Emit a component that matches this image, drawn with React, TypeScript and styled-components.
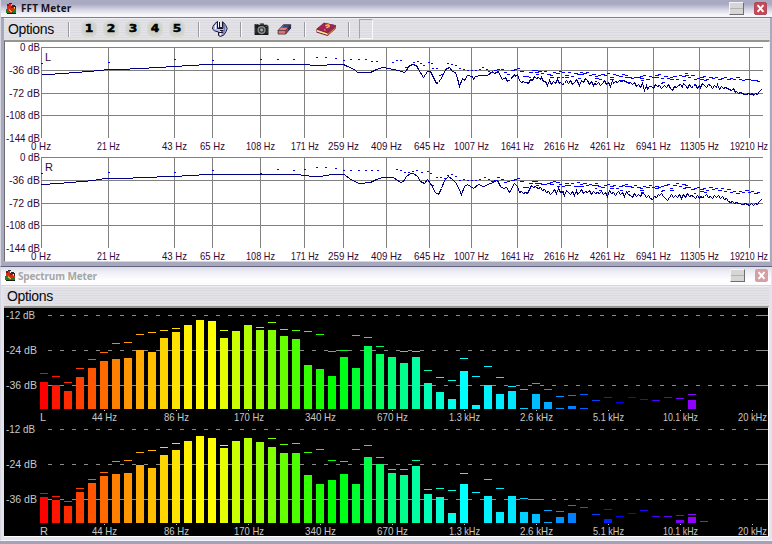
import React from 'react';
import styled, { createGlobalStyle } from 'styled-components';

const Global = createGlobalStyle`
  * { box-sizing: border-box; }
  body { margin: 0; background: #a3a3b8; overflow: hidden; }
`;

const Desktop = styled.main`
  width: 772px;
  height: 544px;
  display: flex;
  flex-direction: column;
  overflow: hidden;
  font-family: "Liberation Sans", Arial, sans-serif;
  background: #a3a3b8;
`;

const Frame = styled.section<{ $active?: boolean }>`
  height: ${p => (p.$active ? 267 : 274)}px;
  flex: none;
  display: flex;
  flex-direction: column;
  padding: ${p => (p.$active ? '0 2px 4px 3px' : '0 3px 3px 3px')};
  border-left: 1px solid #d6d6e0;
  border-bottom: 1px solid ${p => (p.$active ? '#62627c' : '#f4f4fa')};
  background: ${p => (p.$active ? '#a8a8be' : '#e3e3ee')};
`;

const TitleBar = styled.header<{ $active?: boolean }>`
  height: ${p => (p.$active ? 18 : 19)}px;
  flex: none;
  display: flex;
  align-items: center;
  margin: 0 -2px 0 -3px;
  padding: ${p => (p.$active ? '0 5px 1px 5px' : '0 3px 1px 4px')};
  border-bottom: 1px solid ${p => (p.$active ? '#7d7da0' : '#d5d5e0')};
  background: ${p => p.$active
    ? 'linear-gradient(#aaaac4 0, #a9a9c2 4px, #d8d8e6 10px, #f7f7fb 15px)'
    : 'linear-gradient(#dcdce8 0, #eeeef6 5px, #fff 13px, #fcfcff 18px)'};
`;

const Title = styled.h1<{ $active?: boolean }>`
  margin: 0 auto 0 ${p => (p.$active ? 4 : 2)}px;
  font: bold 10px/14px "Open Sans", "Liberation Sans", sans-serif;
  letter-spacing: ${p => (p.$active ? '0.1px' : '-0.15px')};
  color: ${p => (p.$active ? '#17121c' : '#a6a6a6')};
`;

const MinButton = styled.button`
  width: 15px;
  height: 13px;
  padding: 0;
  border: 1px solid;
  border-color: #f4f4f4 #6e6e72 #6e6e72 #f4f4f4;
  background: linear-gradient(#d6d6d6 5px, #b2b2b2 5px, #b2b2b2 6px, #d6d6d6 6px);
`;

const CloseButton = styled.button<{ $active?: boolean }>`
  width: 13px;
  height: 13px;
  margin-left: 10px;
  padding: 0;
  display: grid;
  place-items: center;
  border: 1px solid ${p => (p.$active ? '#b04a58' : '#cfa0a5')};
  border-radius: 2px;
  background: ${p => (p.$active ? '#c54758' : '#d5a1a5')};
  svg { width: 9px; height: 9px; }
`;

const Toolbar = styled.nav<{ $dense?: boolean }>`
  height: ${p => (p.$dense ? 22 : 20)}px;
  flex: none;
  display: flex;
  align-items: center;
  padding-left: ${p => (p.$dense ? 4 : 3)}px;
  background: repeating-linear-gradient(#e1e1e6 0 2px, #dbdbe1 2px 3px, #e4e4e8 3px 4px, #dadae0 4px 5px);
  box-shadow: inset 0 1px #ededf2;
`;

const MenuLabel = styled.span`
  width: 60px;
  font-size: 14px;
  line-height: 18px;
  letter-spacing: -0.35px;
  color: #08080c;
`;

const Divider = styled.i<{ $after: number }>`
  width: 2px;
  height: 15px;
  flex: none;
  margin-right: ${p => p.$after}px;
  border-left: 1px solid #9a9aa0;
  border-right: 1px solid #f8f8fa;
`;

const Presets = styled.div`
  display: flex;
  gap: 6px;
  margin-right: 13px;
`;

const Preset = styled.button`
  width: 16px;
  height: 16px;
  padding: 0 0 1px;
  border: 0;
  border-radius: 6px;
  background: #d1d3ca;
  box-shadow: inset 0 0 2px 1px #dbdcd8;
  font: bold 11px/14px "DejaVu Sans", sans-serif;
  -webkit-text-stroke: 0.5px #000;
  color: #000;
  span { display: block; transform: scaleX(1.12); }
`;

const IconSlot = styled.span<{ $w: number; $after: number }>`
  width: ${p => p.$w}px;
  height: 18px;
  flex: none;
  display: grid;
  place-items: center;
  margin-right: ${p => p.$after}px;
`;

const EmptySlot = styled.span`
  width: 14px;
  height: 20px;
  border: 1px solid;
  border-color: #a4a4aa #fafafc #fafafc #a4a4aa;
`;

const Panel = styled.div<{ $dark?: boolean }>`
  flex: 1;
  min-height: 0;
  border-top: 2px solid #96968f;
  border-right: 1px solid ${p => (p.$dark ? '#fff' : '#f3f3ee')};
  border-left: ${p => (p.$dark ? 0 : 1)}px solid #6e6e72;
  border-bottom: 1px solid ${p => (p.$dark ? '#fff' : '#d8d8cf')};
  background: ${p => (p.$dark ? '#000' : '#fff')};
  overflow: hidden;
`;

const Plot = styled.svg`
  display: block;
  shape-rendering: crispEdges;
  text { font: 11px "Liberation Sans", Arial, sans-serif; }
`;

const AppIcon = () => (
  <svg width="11" height="11" viewBox="0 0 11 11" shapeRendering="crispEdges">
    <path d="M1 1h4v2h2v1h1v2h2v4H1z" fill="#d82a16" />
    <path d="M1 1h2v2H1zM5 3h2v2H5z" fill="#8c1010" />
    <path d="M3 0h3v1H3zM6 2h3v1h1v3H9V4H7V3H6z" fill="#1e2a30" />
    <path d="M0 6h2v2h2v2H0zM6 8h2V7h2v3H6z" fill="#207a2c" />
    <path d="M3 6h1v1h1v1h1v1H4V8H3zM8 5h1v1H8z" fill="#f1a321" />
    <path d="M1 10h9v1H1z" fill="#171c14" />
  </svg>
);

const Cross = () => (
  <svg viewBox="0 0 10 10"><path d="M1.7 1.3 8.3 8.7M8.3 1.3 1.7 8.7" stroke="#fff" strokeWidth="2.2" /></svg>
);

const WrenchIcon = () => (
  <svg width="16" height="16" viewBox="0 0 16 16">
    <path d="M5.5.5 3 2.5 1 5.5.5 8l2 1.8 4 1.2v3.5l2 1 3.5-1.7 2-3.3 1.2-3-1.4-3-2.3-3-1-.8V6.5h-5z" fill="#b9bde8" stroke="#15152f" />
    <path d="M7.5 1v5M5.5 1v6.5H11V1" fill="none" stroke="#15152f" />
    <path d="M6.5 1v5.5M3.5 4v4M8.5 9v5" fill="none" stroke="#fff" />
    <path d="M8 9.5h3.5M10 9v2M7 11.5h4" stroke="#15152f" />
    <path d="M12.5 4v5l-1.7 4.5" fill="none" stroke="#777bb4" strokeWidth="1.4" />
  </svg>
);

const CameraIcon = () => (
  <svg width="17" height="13" viewBox="0 0 17 14">
    <path d="M1 1h4v1h2V.5h4V2h4v1h1v10H1z" fill="#1b1d1d" />
    <path d="M2 1.5h2M6.5 1h4M13 3.5h2" stroke="#6f7272" />
    <path d="M2.5 5v6M14.5 5v6" stroke="#3f4242" />
    <circle cx="8.6" cy="7.6" r="4.4" fill="#8e9292" />
    <circle cx="8.6" cy="7.6" r="3" fill="#3b3f40" />
    <circle cx="8.6" cy="7.6" r="1.6" fill="#a9aeae" />
  </svg>
);

const EraserIcon = () => (
  <svg width="15" height="11" viewBox="0 0 16 12">
    <path d="M6.5 1h8L9.5 7H1z" fill="#e28786" />
    <path d="M7.5.7h7.2L11.8 4H4.6z" fill="#244f91" />
    <path d="M1 7h8v3.8H1z" fill="#df7272" />
    <path d="M9.4 7 14.7.8v3.7L9.4 10.8z" fill="#a94247" />
    <path d="m11.7 4 3-3.3v3.8l-3 3z" fill="#173462" />
    <path d="M1 7h8.3v4H1zM1 7 6.7.7h8v4l-5.3 6.1M9.3 7l5.4-6.2" fill="none" stroke="#311f30" strokeWidth=".8" />
  </svg>
);

const BookIcon = () => (
  <svg width="21" height="15" viewBox="0 0 21 15">
    <path d="M.5 7 8 .7l12 2.6v3.2l-8.5 7.6L.5 10.4z" fill="#722041" />
    <path d="m1 7.8 10.3 3.4L20 4.2v1.7l-8.5 7L1 9.6z" fill="#ffc94d" />
    <path d="m1 9 10.4 3.1" fill="none" stroke="#fff0a6" strokeWidth=".9" />
    <path d="m11.4 12.6 8.6-7V4l-8.6 6.7z" fill="#8a3a4d" />
    <path d="M.5 7 8 .7l12 2.6-8.8 7.4z" fill="#9d2458" />
    <path d="M9.4 3.8c2-1.5 4.5-.7 3.7.6-.5.8-2.4.5-2.8 1.7M9.3 7.6l-.8.6" stroke="#ffc233" strokeWidth="1.4" fill="none" />
  </svg>
);

const gridX = [41, 108, 174, 212, 260, 304, 343, 386, 429, 471, 517, 561, 607, 653, 699, 749];
const freqs: [string, number, number][] = [
  ['0 Hz', 31, 20], ['21 Hz', 97, 23], ['43 Hz', 162, 25], ['65 Hz', 200, 25], ['108 Hz', 246, 29],
  ['171 Hz', 291, 28], ['259 Hz', 328, 31], ['409 Hz', 371, 31], ['645 Hz', 414, 31], ['1007 Hz', 454, 35],
  ['1641 Hz', 501, 33], ['2616 Hz', 544, 35], ['4261 Hz', 590, 35], ['6941 Hz', 636, 35],
  ['11305 Hz', 680, 39], ['19210 Hz', 730, 38],
];
const levels: [string, number, number, number][] = [
  ['0 dB', 20, 20, 51], ['-36 dB', 9, 31, 74], ['-72 dB', 9, 31, 97], ['-108 dB', 6, 34, 119], ['-144 dB', 6, 34, 142],
];

const curveL = '41,74 48,74 62,73 75,72 88,71 99,70 108,69 119,69 140,68 158,67 174,66 190,65 207,64 304,64 315,65 322,65 332,64 343,64 347,66 354,69 357,72 370,72 376,69 382,67 388,68 398,70 404,72 406,70 408,66 412,64 416,65 418,69 423,77 427,71 430,71 433,77 436,83 438,82 442,76 445,69 449,67 452,71 455,72 457,78 459,86 462,78 464,80 467,75 472,76 473,79 475,76 480,75 487,75 492,71 494,73 498,71 500,76 502,79 505,77 507,81 510,79 514,74';
const curveR = '41,74 58,73 70,72 82,71 93,70 104,68 125,68 140,67 174,66 190,65 207,64 297,64 304,65 313,66 320,66 331,64 344,64 350,69 359,73 370,72 376,69 382,67 393,67 400,72 403,71 406,66 410,63 413,63 417,66 420,71 424,73 427,69 430,73 435,82 438,84 441,78 444,70 448,66 452,69 456,73 461,84 464,76 467,74 473,78 478,74 483,76 490,73 497,70 500,76 503,78 506,77 509,82 514,73';
const tailL = [76, 74, 80, 82, 81, 82, 82, 83, 79, 80, 76, 78, 77, 79, 77, 81, 81, 85, 80, 84, 81, 83, 79, 83, 82, 84, 83, 80, 83, 80, 84, 82, 79, 81, 85, 80, 82, 78, 80, 84, 81, 85, 83, 84, 82, 85, 83, 80, 84, 82, 86, 80, 83, 81, 82, 80, 81, 80, 81, 82, 83, 82, 84, 82, 86, 84, 87, 83, 90, 85, 89, 86, 86, 88, 84, 86, 85, 88, 86, 85, 87, 84, 88, 90, 86, 87, 85, 84, 87, 83, 85, 88, 84, 87, 86, 84, 88, 85, 87, 83, 85, 87, 84, 85, 88, 85, 87, 84, 89, 86, 88, 87, 88, 89, 90, 88, 92, 91, 93, 92, 93, 94, 94, 93, 94, 93, 95, 93, 94, 91, 89];
const tailR = [74, 76, 82, 81, 83, 82, 83, 79, 75, 77, 76, 77, 78, 77, 80, 79, 82, 81, 84, 82, 79, 83, 78, 82, 81, 85, 80, 82, 84, 81, 85, 80, 84, 82, 79, 83, 81, 82, 80, 84, 81, 83, 82, 83, 81, 84, 82, 86, 80, 83, 82, 85, 82, 81, 84, 82, 86, 81, 84, 85, 87, 83, 86, 84, 86, 82, 84, 87, 85, 88, 89, 86, 87, 84, 85, 83, 86, 88, 90, 87, 84, 87, 85, 87, 84, 88, 84, 87, 83, 86, 85, 86, 88, 85, 88, 86, 87, 86, 84, 87, 86, 88, 85, 87, 85, 88, 86, 89, 88, 91, 92, 91, 93, 92, 93, 93, 94, 94, 93, 94, 95, 93, 95, 93, 94, 91, 89];

const sparseL = '41,63 108,62 174,59 212,60 260,59 277,59 293,59 316,57 325,57 335,58 343,60 350,59 358,59 365,59 371,61 376,61 392,62 396,60 400,60 405,67 413,62 417,61 420,63 423,65 428,62 431,63 432,68 436,68 439,75 441,74 447,63 451,64 455,65 459,68 463,69 467,70 471,70 475,70 479,69 482,67 486,69 488,71 491,72 494,70 497,69 501,69 504,72 507,74';
const sparseR = '41,63 108,62 174,62 212,60 260,63 277,59 293,60 304,59 316,57 325,57 335,58 343,60 350,60 358,60 365,60 371,60 377,60 396,59 400,60 404,62 408,62 412,61 416,60 421,62 427,61 430,63 432,75 436,67 440,67 444,68 447,65 451,64 455,66 459,70 463,69 467,70 471,70 475,70 479,69 484,67 488,69 491,71 494,70 497,67 501,69 504,72 507,71';
const upperL = [70, 69, 68, 71, 76, 76, 72, 70, 70, 71, 73, 71, 74, 75, 72, 73, 71, 72, 75, 72, 76, 73, 74, 72, 73, 72, 75, 74, 76, 75, 74, 75, 73, 77, 74, 75, 76, 74, 75, 77, 78, 77, 77, 76, 75, 79, 76, 77, 75, 74, 78, 76, 78, 77, 76, 79, 75, 76, 73, 77, 75, 79, 78, 77, 76, 79, 77, 78, 77, 79, 78, 77, 79, 78, 79, 77, 79, 80, 79, 79, 80, 80, 81];
const upperR = [70, 69, 68, 71, 77, 77, 73, 71, 71, 73, 74, 74, 73, 72, 71, 72, 74, 76, 73, 75, 73, 76, 72, 74, 73, 75, 74, 75, 73, 76, 77, 75, 74, 76, 75, 78, 76, 75, 74, 76, 77, 75, 77, 78, 76, 77, 75, 77, 76, 77, 76, 75, 74, 78, 75, 73, 76, 74, 75, 77, 79, 78, 77, 79, 78, 80, 77, 79, 78, 80, 78, 81, 79, 82, 81, 83, 81, 82, 80, 82, 81, 83, 82];

function peakPath(sparse: string, upper: number[]) {
  const marks = sparse.split(' ').map(p => {
    const [x, y] = p.split(',').map(Number);
    return `M${x} ${y + 0.5}h${x > 490 ? 3 : 2}`;
  });
  upper.forEach((y, i) => {
    const x = 511 + i * 3;
    marks.push(`M${x} ${y + 0.5}h${i % 3 ? 3 : 4}`);
    if (x < 522) return;
    if (i % 7 === 1 && x < 720) marks.push(`M${x + 1} ${y + 4.5}h3`);
    if (i % 5 === 3 && x < 710) marks.push(`M${x} ${y + 2.5}h4`);
    if (i % 11 === 6 && x < 700) marks.push(`M${x} ${y + 5.5}h2`);
  });
  return marks.join('');
}

function FftChannel({ name, top }: { name: 'L' | 'R'; top: number }) {
  const left = name === 'L';
  const values = left ? tailL : tailR;
  const step = 246 / (values.length - 1);
  const tail = values.map((y, i) => `${Math.round(515 + i * step)},${y}`).join(' ');
  return (
    <g transform={`translate(0 ${top})`}>
      <g fill="#808080">
        {[47, 70, 93, 115].map(y => <rect key={y} x="41" y={y} width="722" height="1" />)}
        {gridX.map(x => <rect key={x} x={x} y="47" width="1" height="91" />)}
      </g>
      <g fill="#2e0838">
        {levels.map(([t, x, w, y]) => <text key={t} x={x} y={y} textLength={w} lengthAdjust="spacingAndGlyphs">{t}</text>)}
        {freqs.map(([t, x, w]) => <text key={t} x={x} y="150" textLength={w} lengthAdjust="spacingAndGlyphs">{t}</text>)}
        <text x="45" y="61">{name}</text>
      </g>
      <polyline transform="translate(.5 .5)" fill="none" points={`${left ? curveL : curveR} ${tail}`} stroke="#000080" />
      <path d={peakPath(left ? sparseL : sparseR, left ? upperL : upperR)} stroke="#0000ff" />
    </g>
  );
}

// Level tops and held peaks, in pixel rows; null marks a band with nothing drawn.
type Rows = (number | null)[];
const _ = null;
const topsL: Rows = [382, 385, 391, 377, 368, 361, 359, 358, 350, 352, 338, 332, 325, 320, 321, 338, 331, 325, 330, 330, 336, 339, 365, 369, 376, 357, 368, 346, 354, 357, 363, 357, 383, 392, 399, 371, 405, 385, 394, 391, 408, 394, 402, 408, 406, 408, _, _, _, _, _, _, _, _, 400];
const peaksL: Rows = [373, 376, 382, 368, 359, 352, 343, 342, 334, 332, 330, 328, _, _, _, 330, _, _, 327, 322, 329, 330, 331, 334, 351, 350, 335, 337, 346, _, 351, 351, 370, 377, 380, 358, 376, 366, 377, 386, 389, 383, 389, 396, 395, 394, 400, 397, 402, 397, 399, 400, 397, 398, 394];
const topsR: Rows = [497, 500, 506, 492, 483, 476, 474, 473, 465, 468, 455, 450, 441, 436, 438, 448, 441, 438, 442, 447, 453, 453, 475, 484, 480, 474, 484, 457, 464, 473, 475, 466, 494, 497, 513, 484, _, 496, 512, 496, 512, 514, 522, 517, 513, _, _, 519, _, _, _, _, _, 520, 517];
const peaksR: Rows = [493, 496, 501, 488, 479, 472, 461, 460, 452, 450, 447, 443, _, _, _, 445, _, _, _, 438, 444, 443, 452, 449, 460, 461, 449, 445, 457, 469, 469, 460, 489, 488, 490, 473, 492, 479, 488, _, 498, 499, 510, 511, 505, 507, 514, 509, 516, 513, 510, 516, 516, 515, 514, 521];

const hueStops = [[0, 0], [10, 50], [12, 57], [14, 60], [24, 120], [35, 180], [39, 186], [44, 210], [48, 240], [55, 280]];
function bandColor(i: number) {
  const n = hueStops.findIndex(s => s[0] >= i);
  if (n <= 0) return '#f00';
  const [a, h] = hueStops[n - 1];
  const [b, k] = hueStops[n];
  return `hsl(${h + ((i - a) / (b - a)) * (k - h)} 100% 50%)`;
}

const bandLabels: [string, number, number][] = [
  ['44 Hz', 92, 25], ['86 Hz', 164, 25], ['170 Hz', 234, 30], ['340 Hz', 305, 31], ['670 Hz', 377, 31],
  ['1.3 kHz', 449, 31], ['2.6 kHz', 520, 33], ['5.1 kHz', 593, 31], ['10.1 kHz', 663, 35], ['20 kHz', 738, 29],
];

function SpectrumChannel({ name, base, tops, peaks }: { name: string; base: number; tops: Rows; peaks: Rows }) {
  return (
    <g>
      {['-12 dB', '-24 dB', '-36 dB'].map((t, n) => {
        const y = base - 94 + n * 35;
        return (
          <g key={t}>
            <path d={`M48 ${y}.5H756`} stroke="#8c8c8c" strokeDasharray="4 8" />
            <rect x="756" y={y} width="12" height="1" fill="#8c8c8c" />
            <text x="6" y={y + 4} fill="#c8c8c8" textLength={n ? 31 : 29} lengthAdjust="spacingAndGlyphs">{t}</text>
          </g>
        );
      })}
      {tops.map((y, i) => y !== null && <rect key={i} x={40 + i * 12} y={y} width="8" height={base - y} fill={bandColor(i)} />)}
      {peaks.map((y, i) => y !== null && <rect key={i} x={40 + i * 12} y={y} width="8" height="1" fill={bandColor(i)} />)}
      <g fill="#c8c8c8">
        <text x="40" y={base + 12}>{name}</text>
        {bandLabels.map(([t, x, w], i) => (
          <g key={t}>
            <rect x={104 + i * 72} y={base + 1} width="1" height="1" />
            <text x={x} y={base + 12} textLength={w} lengthAdjust="spacingAndGlyphs">{t}</text>
          </g>
        ))}
      </g>
    </g>
  );
}

export default function App() {
  return (
    <Desktop>
      <Global />
      <Frame $active>
        <TitleBar $active>
          <AppIcon />
          <Title $active>FFT Meter</Title>
          <MinButton aria-label="Minimize" />
          <CloseButton $active aria-label="Close"><Cross /></CloseButton>
        </TitleBar>
        <Toolbar $dense>
          <MenuLabel>Options</MenuLabel>
          <Divider $after={11} />
          <Presets>{[1, 2, 3, 4, 5].map(n => <Preset key={n}><span>{n}</span></Preset>)}</Presets>
          <Divider $after={12} />
          <IconSlot $w={16} $after={12}><WrenchIcon /></IconSlot>
          <Divider $after={11} />
          <IconSlot $w={17} $after={6}><CameraIcon /></IconSlot>
          <IconSlot $w={16} $after={12}><EraserIcon /></IconSlot>
          <Divider $after={10} />
          <IconSlot $w={21} $after={11}><BookIcon /></IconSlot>
          <Divider $after={9} />
          <EmptySlot />
        </Toolbar>
        <Panel>
          <Plot width="764" height="220" viewBox="5 42 764 220">
            <FftChannel name="L" top={0} />
            <FftChannel name="R" top={110} />
          </Plot>
        </Panel>
      </Frame>
      <Frame>
        <TitleBar>
          <AppIcon />
          <Title>Spectrum Meter</Title>
          <MinButton aria-label="Minimize" />
          <CloseButton aria-label="Close"><Cross /></CloseButton>
        </TitleBar>
        <Toolbar>
          <MenuLabel>Options</MenuLabel>
        </Toolbar>
        <Panel $dark>
          <Plot width="764" height="230" viewBox="4 308 764 230">
            <SpectrumChannel name="L" base={409} tops={topsL} peaks={peaksL} />
            <SpectrumChannel name="R" base={523} tops={topsR} peaks={peaksR} />
          </Plot>
        </Panel>
      </Frame>
    </Desktop>
  );
}
